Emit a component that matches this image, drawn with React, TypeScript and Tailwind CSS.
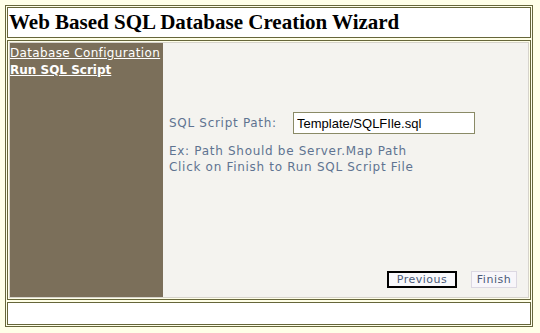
import React, { useState } from 'react';

// Web Based SQL Database Creation Wizard - step 2 (Run SQL Script)
function App() {
  const [path, setPath] = useState<string>('Template/SQLFIle.sql');

  return (
    <div className="w-[540px] h-[333px] bg-[#ffffe8] pt-[5px] pl-[5px] font-['DejaVu_Sans',Verdana,sans-serif]">
      <div className="w-[528px] h-[322px] border border-[#66663a] p-[1px] flex flex-col gap-[2px]">
        {/* title */}
        <div className="h-[31px] shrink-0 border border-[#66663a] bg-white flex items-center pl-[1px]">
          <h1 className="font-['Liberation_Serif','Times_New_Roman',serif] font-bold text-[21px] leading-none text-black">
            Web Based SQL Database Creation Wizard
          </h1>
        </div>

        {/* wizard body */}
        <div className="h-[260px] shrink-0 border border-[#66663a] p-[1px]">
          <div className="h-full border border-[#d6d3cc] flex">
            <div className="w-[153px] shrink-0 bg-[#7b6f5a] pt-[2px] flex flex-col text-[12px] leading-[17px] text-white">
              <a href="#" className="underline tracking-[0.35px]">Database Configuration</a>
              <a href="#" className="underline font-bold">Run SQL Script</a>
            </div>
            <div className="flex-1 bg-[#f4f3ef] flex flex-col pl-[6px] pr-[11px] pt-[69px] pb-[9px] text-[12px] tracking-[0.7px] text-[#5f7391]">
              <div className="flex items-center">
                <span className="w-[124px] shrink-0">SQL Script Path:</span>
                <input
                  value={path}
                  onChange={e => setPath(e.target.value)}
                  className="w-[182px] h-[22px] border border-[#8a8a66] bg-white px-[3px] text-[13px] tracking-normal text-black font-['Liberation_Sans',Arial,sans-serif] outline-none"
                />
              </div>
              <div className="mt-[9px] leading-[16px]">
                <p>Ex: Path Should be Server.Map Path</p>
                <p>Click on Finish to Run SQL Script File</p>
              </div>
              <div className="mt-auto flex justify-end gap-[14px] tracking-[0.5px]">
                <button className="w-[70px] h-[17px] border-2 border-black bg-[#f9f9fc] text-[11px] leading-none text-[#4b5a78]">
                  Previous
                </button>
                <button className="w-[46px] h-[17px] border border-[#dcd8e2] bg-[#f8f6fa] text-[11px] leading-none text-[#4b5a78]">
                  Finish
                </button>
              </div>
            </div>
          </div>
        </div>

        {/* footer */}
        <div className="h-[23px] shrink-0 border border-[#66663a] bg-white"></div>
      </div>
    </div>
  );
}

export default App;
